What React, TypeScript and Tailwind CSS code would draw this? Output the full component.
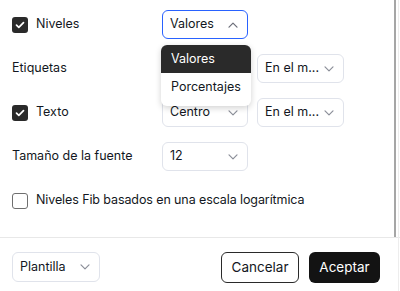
import React from "react";

function Chevron({ up = false, className = "" }: { up?: boolean; className?: string }) {
  return (
    <svg width="10" height="6" viewBox="0 0 10 6" fill="none" className={className}>
      <path
        d={up ? "M1 5.2 5 1.2 9 5.2" : "M1 0.8 5 4.8 9 0.8"}
        stroke="currentColor"
        strokeWidth="1.2"
        strokeLinecap="round"
        strokeLinejoin="round"
      />
    </svg>
  );
}

function Checkbox({ checked }: { checked: boolean }) {
  if (!checked) {
    return <div className="w-4 h-4 rounded-[3px] border border-[#6f6f6f] bg-white shrink-0" />;
  }
  return (
    <div className="w-4 h-4 rounded-[3px] bg-[#2a2a2a] flex items-center justify-center shrink-0">
      <svg width="10" height="8" viewBox="0 0 10 8" fill="none">
        <path d="M1.5 4.2 3.8 6.4 8.5 1.6" stroke="white" strokeWidth="1.7" strokeLinecap="round" strokeLinejoin="round" />
      </svg>
    </div>
  );
}

function Select({ value, open = false, w = "w-[86px]" }: { value: string; open?: boolean; w?: string }) {
  return (
    <div
      className={`${w} h-[29px] rounded-[6px] flex items-center justify-between pl-[7px] pr-[9px] text-[12.5px] text-[#131722] bg-white ${
        open ? "border-[1.5px] border-[#2962ff]" : "border border-[#e0e3eb]"
      }`}
    >
      <span className="truncate">{value}</span>
      <Chevron up={open} className={open ? "text-[#6a6d78]" : "text-[#8c8f99]"} />
    </div>
  );
}

export default function App() {
  return (
    <div className="relative w-[400px] h-[291px] overflow-hidden bg-white flex flex-col font-['Inter',sans-serif] text-[#131722]">
      {/* Scrollable body */}
      <div className="relative h-[237px] shrink-0 px-3 pt-[10px]">
        <div className="flex flex-col gap-[15px]">
          <div className="flex items-center h-[29px]">
            <div className="w-[150px] flex items-center gap-[8px] text-[12.5px]">
              <Checkbox checked />
              <span>Niveles</span>
            </div>
            <Select value="Valores" open />
          </div>

          <div className="flex items-center h-[29px]">
            <div className="w-[150px] text-[12.5px]">Etiquetas</div>
            <div className="flex gap-[9px]">
              <Select value="" />
              <Select value="En el m..." w="w-[87px]" />
            </div>
          </div>

          <div className="flex items-center h-[29px]">
            <div className="w-[150px] flex items-center gap-[8px] text-[12.5px]">
              <Checkbox checked />
              <span>Texto</span>
            </div>
            <div className="flex gap-[9px]">
              <Select value="Centro" />
              <Select value="En el m..." w="w-[87px]" />
            </div>
          </div>

          <div className="flex items-center h-[29px]">
            <div className="w-[150px] text-[12.5px]">Tamaño de la fuente</div>
            <Select value="12" />
          </div>

          <div className="flex items-center h-[29px] gap-[8px] text-[12.5px]">
            <Checkbox checked={false} />
            <span className="tracking-[-0.1px]">Niveles Fib basados en una escala logarítmica</span>
          </div>
        </div>

        {/* Open dropdown menu */}
        <div className="absolute left-[161px] top-[45px] w-[90px] pb-[5px] bg-white rounded-[6px] shadow-[0_2px_6px_rgba(0,0,0,0.18)] text-[12.5px] overflow-hidden">
          <div className="h-[28px] flex items-center pl-[10px] bg-[#2a2a2a] text-white">Valores</div>
          <div className="h-[28px] flex items-center pl-[10px] text-[#131722]">Porcentajes</div>
        </div>

        {/* scrollbar */}
        <div className="absolute right-[4px] top-0 w-[2px] h-full bg-[#a6a6a6]" />
      </div>

      {/* Footer */}
      <div className="flex-1 border-t border-[#e8e8e8] flex items-start justify-between pl-3 pr-[20px] pt-[14px]">
        <Select value="Plantilla" w="w-[88px] !h-[30px]" />
        <div className="flex gap-[10px]">
          <button className="w-[78px] h-[31px] rounded-[6px] border border-[#2a2a2a] text-[13.5px] text-[#131722] bg-white">
            Cancelar
          </button>
          <button className="w-[71px] h-[31px] rounded-[6px] bg-[#131313] text-[13.5px] text-white">
            Aceptar
          </button>
        </div>
      </div>

      {/* dialog edge */}
      <div className="absolute right-[1px] top-0 w-px h-full bg-[#ededed]" />
    </div>
  );
}
